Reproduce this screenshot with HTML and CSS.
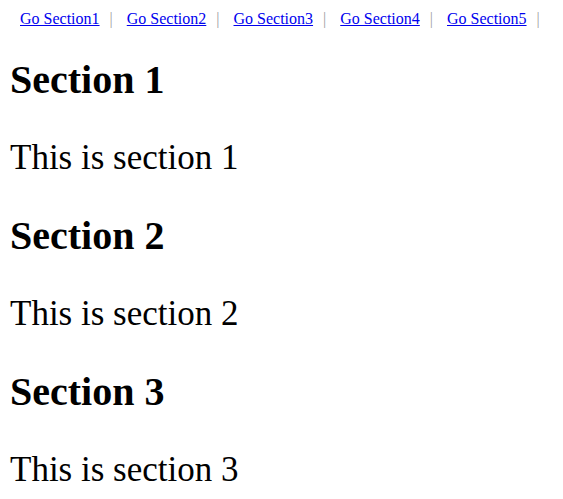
FILE: index.html
```html
<!DOCTYPE html>
<html>
<head>
<meta charset="utf-8">
<link rel="stylesheet" href="styles.css">
</head>
<body>
<nav class="nav">
  <a class="nav-link" href="#s1">Go Section1</a><span class="sep">|</span>
  <a class="nav-link" href="#s2">Go Section2</a><span class="sep">|</span>
  <a class="nav-link" href="#s3">Go Section3</a><span class="sep">|</span>
  <a class="nav-link" href="#s4">Go Section4</a><span class="sep">|</span>
  <a class="nav-link" href="#s5">Go Section5</a><span class="sep">|</span>
</nav>
<section class="section" id="s1">
  <h1 class="title">Section 1</h1>
  <p class="text">This is section 1</p>
</section>
<section class="section" id="s2">
  <h1 class="title">Section 2</h1>
  <p class="text">This is section 2</p>
</section>
<section class="section" id="s3">
  <h1 class="title">Section 3</h1>
  <p class="text">This is section 3</p>
</section>
</body>
</html>
```
FILE: styles.css
```css
html, body {
  margin: 0;
  padding: 0;
  background: #fff;
}
body {
  padding: 10px;
  font-family: "Liberation Serif", "Times New Roman", serif;
  color: #000;
}
.nav {
  display: flex;
  align-items: baseline;
  padding-left: 10px;
  padding-bottom: 3px;
  font-size: 16px;
  line-height: 18px;
  white-space: nowrap;
}
.nav-link {
  color: #0000ee;
  text-decoration: underline;
  flex: none;
}
.sep {
  color: #a0a0a0;
  margin: 0 14px 0 10px;
  flex: none;
}
.title {
  font-size: 40px;
  font-weight: bold;
  margin: 26px 0;
  line-height: 46px;
}
.text {
  font-size: 35px;
  margin: 35px 0;
  line-height: 40px;
}
```
